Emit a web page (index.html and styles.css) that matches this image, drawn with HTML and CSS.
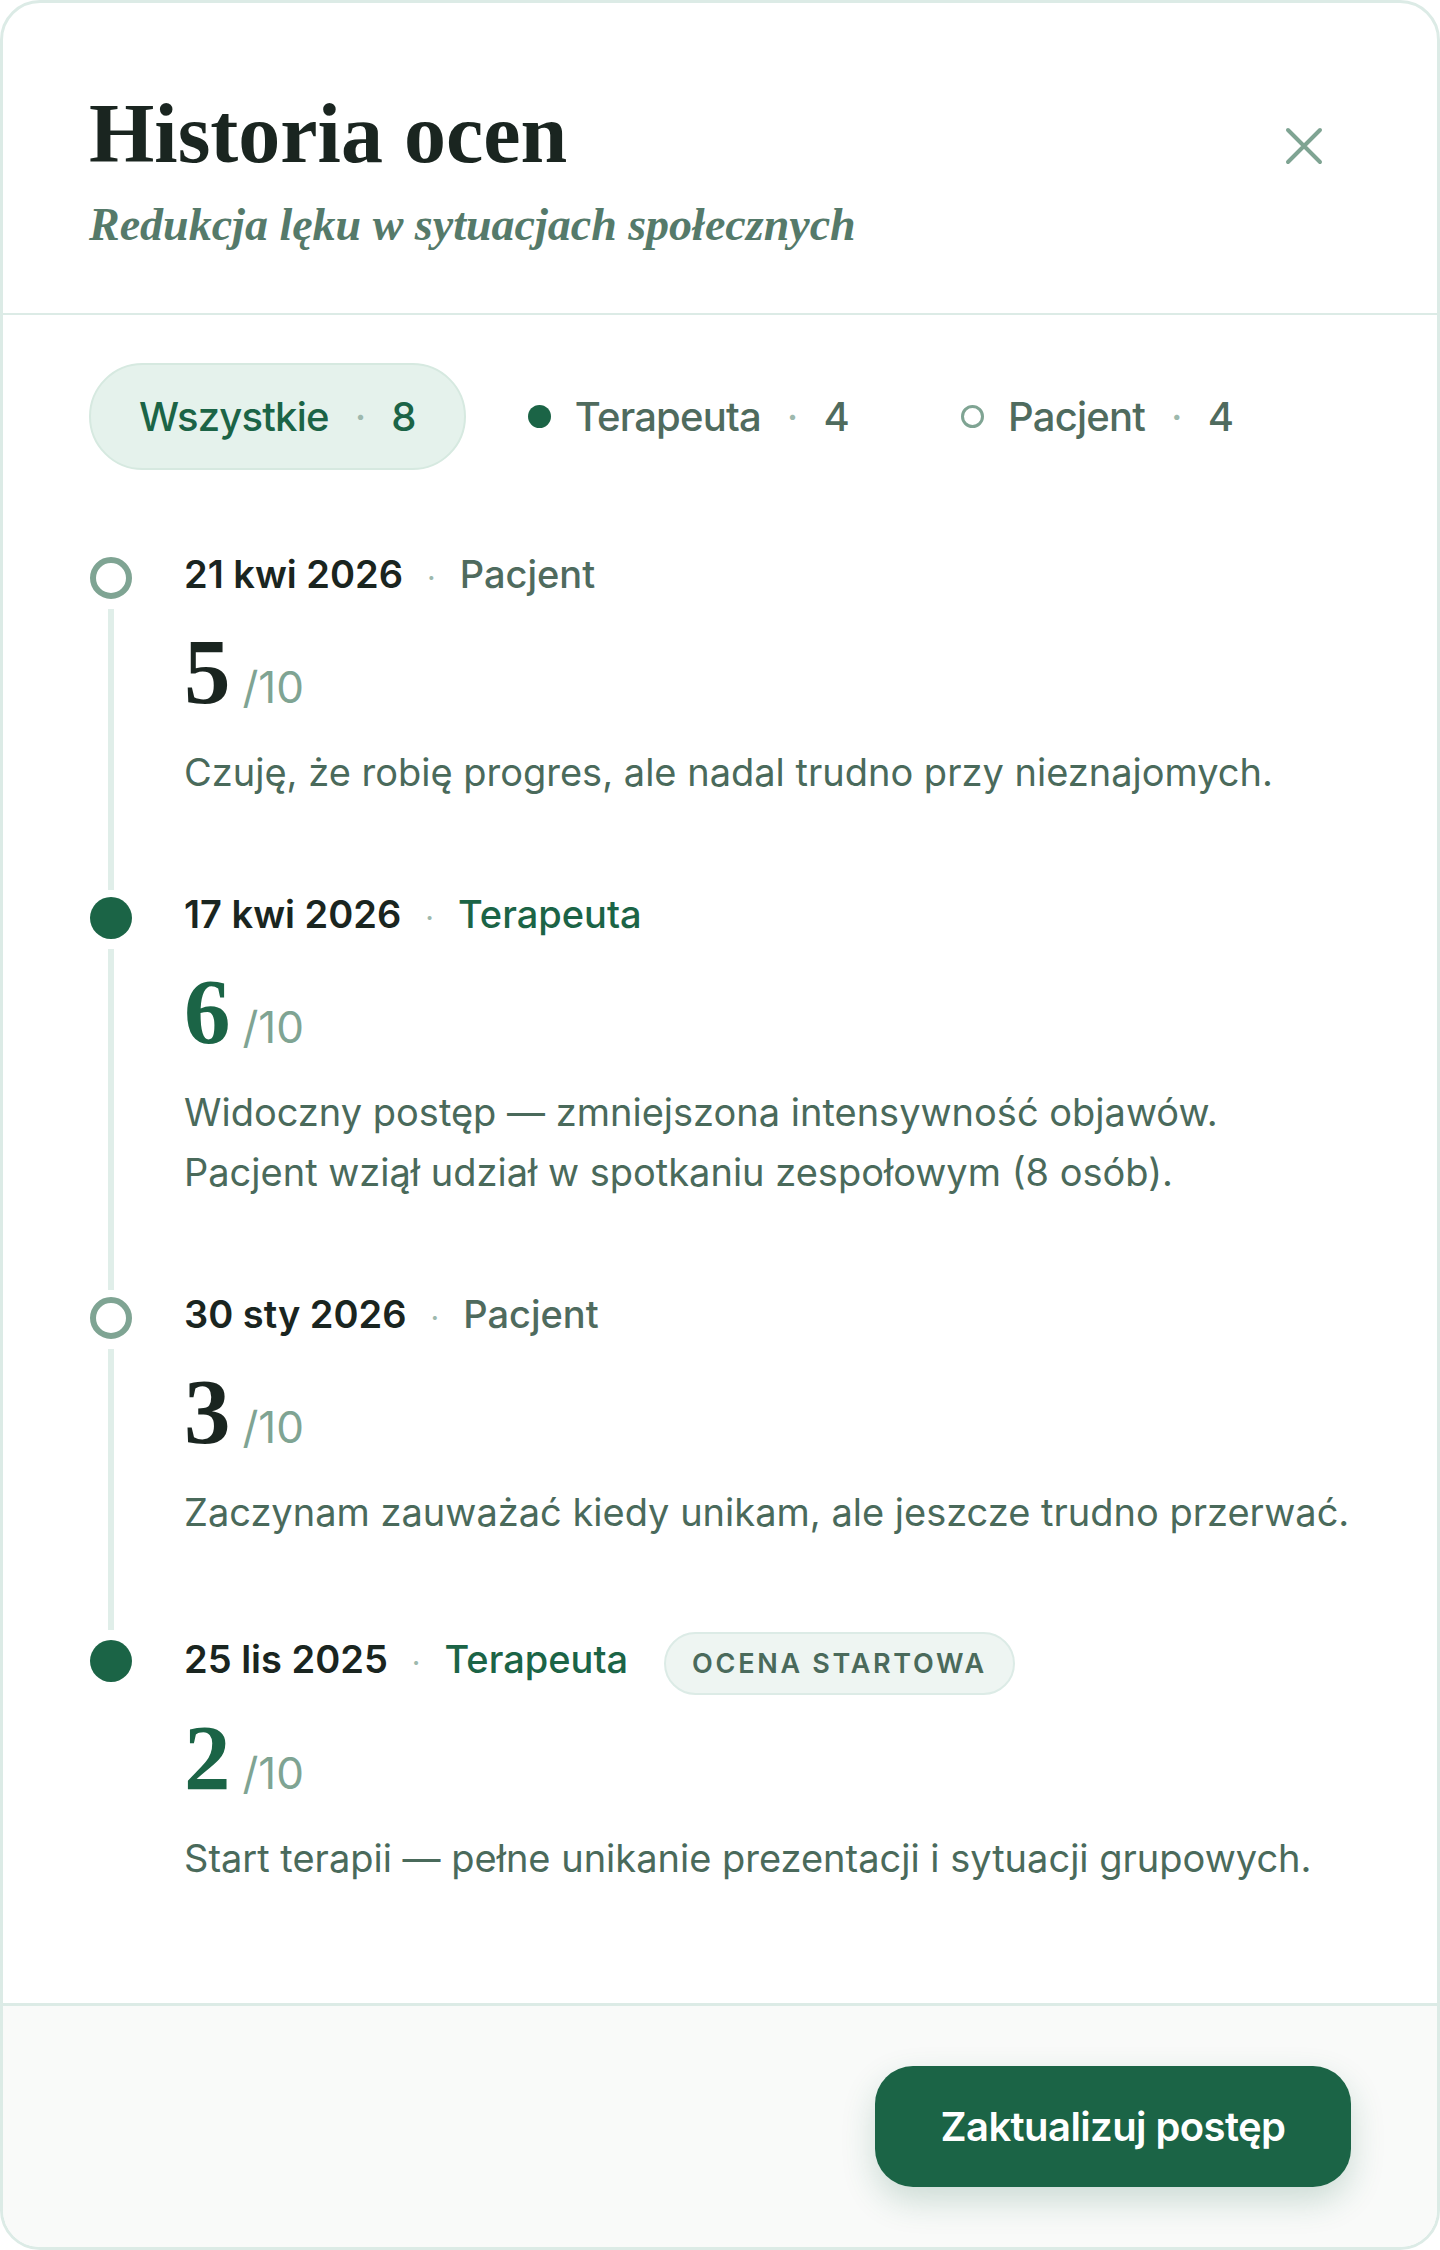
FILE: index.html
```html
<!DOCTYPE html>
<html lang="pl">
<head>
<meta charset="utf-8">
<title>Historia ocen</title>
<link rel="stylesheet" href="styles.css">
</head>
<body>
<div class="card">
  <header class="head">
    <div class="titles">
      <h1 class="title">Historia ocen</h1>
      <p class="subtitle">Redukcja lęku w sytuacjach społecznych</p>
    </div>
    <button class="close" aria-label="Zamknij">
      <svg width="38" height="38" viewBox="0 0 38 38"><path d="M3 3 L35 35 M35 3 L3 35" stroke="#7fa493" stroke-width="4" stroke-linecap="round" fill="none"/></svg>
    </button>
  </header>

  <main class="body">
    <div class="filters">
      <button class="tab active"><span>Wszystkie</span><span class="sep">·</span><span>8</span></button>
      <button class="tab"><span class="dot filled"></span><span>Terapeuta</span><span class="sep">·</span><span>4</span></button>
      <button class="tab"><span class="dot hollow"></span><span>Pacjent</span><span class="sep">·</span><span>4</span></button>
    </div>

    <ol class="timeline">
      <li class="entry">
        <span class="marker hollow"></span>
        <div class="meta"><span class="date">21 kwi 2026</span><span class="sep">·</span><span class="who">Pacjent</span></div>
        <span class="line"></span>
        <div class="content">
          <div class="score"><span class="num">5</span><span class="max">/10</span></div>
          <p class="note">Czuję, że robię progres, ale nadal trudno przy nieznajomych.</p>
        </div>
      </li>
      <li class="entry">
        <span class="marker filled"></span>
        <div class="meta"><span class="date">17 kwi 2026</span><span class="sep">·</span><span class="who therapist">Terapeuta</span></div>
        <span class="line"></span>
        <div class="content">
          <div class="score"><span class="num therapist">6</span><span class="max">/10</span></div>
          <p class="note">Widoczny postęp — zmniejszona intensywność objawów.<br>Pacjent wziął udział w spotkaniu zespołowym (8 osób).</p>
        </div>
      </li>
      <li class="entry">
        <span class="marker hollow"></span>
        <div class="meta"><span class="date">30 sty 2026</span><span class="sep">·</span><span class="who">Pacjent</span></div>
        <span class="line"></span>
        <div class="content">
          <div class="score"><span class="num">3</span><span class="max">/10</span></div>
          <p class="note">Zaczynam zauważać kiedy unikam, ale jeszcze trudno przerwać.</p>
        </div>
      </li>
      <li class="entry last">
        <span class="marker filled"></span>
        <div class="meta"><span class="date">25 lis 2025</span><span class="sep">·</span><span class="who therapist">Terapeuta</span><span class="badge">Ocena startowa</span></div>
        <div class="content">
          <div class="score"><span class="num therapist">2</span><span class="max">/10</span></div>
          <p class="note">Start terapii — pełne unikanie prezentacji i sytuacji grupowych.</p>
        </div>
      </li>
    </ol>
  </main>

  <footer class="foot">
    <button class="cta">Zaktualizuj postęp</button>
  </footer>
</div>
</body>
</html>
```

FILE: styles.css
```css
* { box-sizing: border-box; }

html, body {
  margin: 0;
  padding: 0;
  background: #ffffff;
}

body {
  font-family: "Inter", "Noto Sans", sans-serif;
  color: #1c2b24;
}

.card {
  width: 1440px;
  height: 2250px;
  border: 3px solid #dcebe6;
  border-radius: 40px;
  background: #ffffff;
  overflow: hidden;
  display: flex;
  flex-direction: column;
}

/* Header */
.head {
  display: flex;
  justify-content: space-between;
  align-items: flex-start;
  padding: 85px 86px 58px 86px;
  border-bottom: 2px solid #dcebe6;
}

.title {
  margin: 0;
  font-family: "Liberation Serif", "Times New Roman", serif;
  font-weight: 700;
  font-size: 84px;
  line-height: 92px;
  color: #1a2520;
}

.subtitle {
  margin: 15px 0 0 0;
  font-family: "Liberation Serif", "Times New Roman", serif;
  font-style: italic;
  font-weight: 700;
  font-size: 46px;
  line-height: 60px;
  color: #557a6a;
}

.close {
  width: 64px;
  height: 64px;
  margin: 26px 15px 0 0;
  padding: 0;
  border: 0;
  background: transparent;
  display: flex;
  align-items: center;
  justify-content: center;
}

/* Body */
.body {
  flex: 1;
  padding: 48px 86px 100px 86px;
}

.filters {
  display: flex;
  align-items: center;
  gap: 12px;
}

.tab {
  height: 107px;
  padding: 0 48px;
  border: 2px solid transparent;
  border-radius: 60px;
  background: transparent;
  display: flex;
  align-items: center;
  font-family: "Inter", "Noto Sans", sans-serif;
  font-size: 40px;
  font-weight: 500;
  letter-spacing: -0.02em;
  color: #4f6b5e;
}

.tab.active {
  background: #e5f2ec;
  border-color: #d6e9e0;
  color: #1b6446;
}

.sep {
  color: #9db9ad;
  margin: 0 26px;
  font-weight: 400;
}

.dot {
  width: 23px;
  height: 23px;
  border-radius: 50%;
  margin-right: 24px;
  flex: none;
}

.dot.filled { background: #1b6446; }
.dot.hollow { border: 3px solid #7fa493; }

/* Timeline */
.timeline {
  list-style: none;
  margin: 82px 0 0 0;
  padding: 0;
}

.entry {
  display: grid;
  grid-template-columns: 95px 1fr;
  grid-template-rows: auto 1fr;
  padding-bottom: 90px;
}

.entry.last { padding-bottom: 0; }

.marker {
  grid-column: 1;
  grid-row: 1;
  align-self: center;
  justify-self: start;
  margin: 4px 0 -4px 1px;
  width: 42px;
  height: 42px;
  border-radius: 50%;
}

.marker.hollow { border: 6px solid #7fa493; background: #fff; }
.marker.filled { background: #1b6446; }

.line {
  grid-column: 1;
  grid-row: 2;
  justify-self: start;
  margin-left: 19px;
  width: 6px;
  margin-top: 13px;
  margin-bottom: -88px;
  background: #e0eee9;
}

.meta {
  grid-column: 2;
  grid-row: 1;
  display: flex;
  align-items: baseline;
  min-height: 44px;
  font-size: 38px;
  line-height: 44px;
}

.content {
  grid-column: 2;
  grid-row: 2;
}

.date {
  font-weight: 600;
  color: #1a2520;
}

.meta .sep {
  margin: 0 24px;
  font-size: 30px;
  line-height: 30px;
}

.who {
  font-weight: 500;
  color: #4f6b5e;
}

.who.therapist { color: #1b6446; }

.badge {
  display: inline-block;
  margin-left: 36px;
  margin-bottom: -13px;
  height: 63px;
  padding: 0 26px;
  border: 2px solid #dcebe6;
  border-radius: 40px;
  background: #eef5f2;
  font-size: 27px;
  line-height: 59px;
  font-weight: 600;
  letter-spacing: 0.1em;
  text-transform: uppercase;
  color: #4a6a5b;
}

.score {
  display: flex;
  align-items: baseline;
  margin-top: 31px;
  height: 90px;
}

.num {
  font-family: "Liberation Serif", "Times New Roman", serif;
  font-weight: 700;
  font-size: 93px;
  line-height: 90px;
  color: #1a2520;
}

.num.therapist { color: #1b6446; }

.max {
  margin-left: 12px;
  font-size: 44px;
  color: #7fa493;
}

.note {
  margin: 25px 0 0 0;
  font-size: 38px;
  line-height: 60px;
  color: #4a6a5b;
}

/* Footer */
.foot {
  display: flex;
  justify-content: flex-end;
  padding: 60px 86px 60px 86px;
  border-top: 3px solid #dcebe6;
  background: #f9faf9;
}

.cta {
  width: 476px;
  height: 121px;
  border: 0;
  border-radius: 38px;
  background: #1b6446;
  color: #ffffff;
  font-family: "Inter", "Noto Sans", sans-serif;
  font-size: 40px;
  font-weight: 600;
  letter-spacing: -0.015em;
  box-shadow: 0 14px 34px rgba(27, 100, 70, 0.2);
}
```
